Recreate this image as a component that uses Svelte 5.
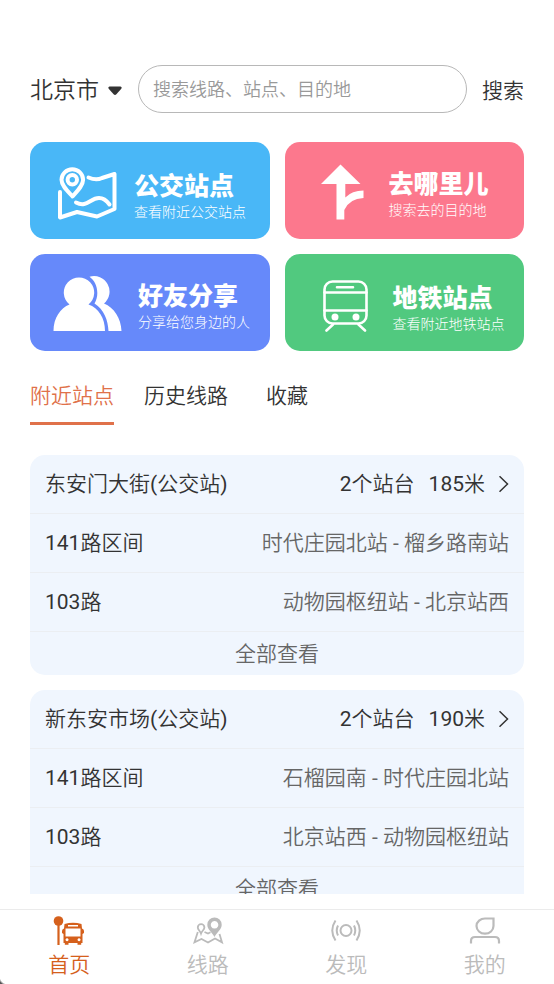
<script>
  const cards = [
    { id: 'bus', title: '公交站点', sub: '查看附近公交站点' },
    { id: 'where', title: '去哪里儿', sub: '搜索去的目的地' },
    { id: 'share', title: '好友分享', sub: '分享给您身边的人' },
    { id: 'metro', title: '地铁站点', sub: '查看附近地铁站点' }
  ];
  const tabs = ['附近站点', '历史线路', '收藏'];
  let active = $state(0);
  const stations = [
    {
      name: '东安门大街(公交站)', count: '2个站台', distance: '185米',
      lines: [
        { name: '141路区间', route: '时代庄园北站 - 榴乡路南站' },
        { name: '103路', route: '动物园枢纽站 - 北京站西' }
      ]
    },
    {
      name: '新东安市场(公交站)', count: '2个站台', distance: '190米',
      lines: [
        { name: '141路区间', route: '石榴园南 - 时代庄园北站' },
        { name: '103路', route: '北京站西 - 动物园枢纽站' }
      ]
    }
  ];
  const nav = [
    { id: 'home', label: '首页' },
    { id: 'line', label: '线路' },
    { id: 'find', label: '发现' },
    { id: 'me', label: '我的' }
  ];
</script>

<div class="app">
  <form class="search" onsubmit={(e) => e.preventDefault()}>
    <button type="button" class="city">
      北京市
      <svg width="16" height="10" viewBox="0 0 16 10" aria-hidden="true"><path d="M2.500 .5h11q2 .6.8 2.200L9.400 8.300Q8 9.600 6.600 8.300L1.700 2.700Q.5 1.100 2.500.5z" fill="#333" /></svg>
    </button>
    <input type="search" aria-label="搜索" placeholder="搜索线路、站点、目的地" />
    <button type="submit" class="submit">搜索</button>
  </form>

  <div class="cards">
    {#each cards as c}
      <button class="card {c.id}">
        {#if c.id === 'bus'}
          <svg width="62" height="54" viewBox="0 0 62 54" fill="none" stroke="#fff" stroke-width="4" stroke-linecap="round" stroke-linejoin="round" aria-hidden="true">
            <path d="M15.500 29.500C10.500 24 4.500 18.500 4.500 12.800a10.800 10.500 0 0 1 21.600 0C26.100 18.500 20.500 24 15.500 29.500z" />
            <circle cx="15.300" cy="12.800" r="4.700" />
            <path d="M31.500 10.500C36 12.500 40 13.500 45 11L57.500 7V42L40 49.500L20 45L3 50.500V25" />
            <path d="M19 35.500C30 41 33 31 42 31C47 31 50 34 52.500 37.500" />
          </svg>
        {:else if c.id === 'where'}
          <svg width="44" height="56" viewBox="0 0 44 56" fill="#fff" aria-hidden="true">
            <path d="M19.500 .5L39.500 20H24.300V33.500Q31 26.500 42.500 26.500V34Q28.500 34.500 23.300 46V55.500H15.500V20H0z" />
          </svg>
        {:else if c.id === 'share'}
          <svg width="70" height="56" viewBox="0 0 70 56" fill="#fff" aria-hidden="true">
            <path d="M16.500 28.500A15.200 15.200 0 1 1 35.500 28.500C45.500 32 52 42 52 55H.5C.5 42 7.500 32 16.500 28.500z" />
            <path d="M36.500 .8A15.500 15.500 0 0 1 51 27.500C61 31.500 68 42 68.500 55H55.500C55 44 51 33.500 41.500 27.500C47 18 44 6 36.500 .8z" />
          </svg>
        {:else}
          <svg width="46" height="52" viewBox="0 0 46 52" fill="none" stroke="#fff" stroke-width="2.600" stroke-linecap="round" aria-hidden="true">
            <rect x="1.500" y="1.500" width="42" height="42" rx="8" />
            <path d="M1.500 12.500h42M1.500 30.500h42M14 7.300h16M10 44.500l-6.500 6M35.500 44.500l6.500 6" />
            <circle cx="12" cy="37" r="3.500" fill="#fff" stroke="none" />
            <circle cx="33" cy="37" r="3.500" fill="#fff" stroke="none" />
          </svg>
        {/if}
        <span class="words"><strong>{c.title}</strong><small>{c.sub}</small></span>
      </button>
    {/each}
  </div>

  <div class="tabs" role="tablist">
    {#each tabs as t, i}
      <button role="tab" aria-selected={active === i} class:on={active === i} onclick={() => (active = i)}>{t}</button>
    {/each}
  </div>

  <main>
    {#each stations as s}
      <section>
        <a class="row head" href="#station">
          <span class="name">{s.name}</span>
          <span>{s.count}</span>
          <span>{s.distance}</span>
          <svg width="10" height="18" viewBox="0 0 10 18" fill="none" stroke="#333" stroke-width="1.500" aria-hidden="true"><path d="M.5 1.200L8.500 9L.5 16.800" /></svg>
        </a>
        {#each s.lines as l}
          <a class="row" href="#line"><span class="name">{l.name}</span><span class="route">{l.route}</span></a>
        {/each}
        <button class="all">全部查看</button>
      </section>
    {/each}
  </main>

  <nav>
    {#each nav as n, i}
      <a href="#{n.id}" class:on={i === 0}>
        {#if n.id === 'home'}
          <svg width="32" height="30" viewBox="0 0 32 30" aria-hidden="true">
            <circle cx="5.500" cy="5" r="4.800" fill="currentColor" />
            <path d="M5.500 8V29" stroke="currentColor" stroke-width="2.200" />
            <path fill="currentColor" fill-rule="evenodd" d="M11.500 8Q20 5.500 28.500 8L29 12.500Q31 13 31 15V17L29.500 18V27H28.200V28.800H24.500V27H15.500V28.800H11.800V27H10.500V18L9 17V15Q9 13 11 12.500zM15 8.900V10.500H25V8.900zM12.500 12.500V20.500H27.500V12.500zM14 22.300a1.500 1.500 0 1 0 .1 0zM26 22.300a1.500 1.500 0 1 0 .1 0z" />
          </svg>
        {:else if n.id === 'line'}
          <svg width="32" height="30" viewBox="0 0 32 30" aria-hidden="true">
            <path fill="currentColor" fill-rule="evenodd" d="M22.500 1.500a7.200 7.200 0 0 1 7.200 7.200C29.700 13.500 25 16 22.500 21C20 16 15.300 13.500 15.300 8.700A7.200 7.200 0 0 1 22.500 1.500zM22.500 5a3.800 3.800 0 1 0 .1 0z" />
            <path fill="none" stroke="currentColor" stroke-width="1.800" d="M9 17.500C8 14.500 5.800 14 5.800 11.500a3.300 3.300 0 0 1 6.600 0C12.400 14 10 14.500 9 17.500zM5.800 16L2.500 26.300L9.500 23L16 26.500L23 22.500L30 26.300L27.500 18M12.500 16L16 17.500L18.500 16.300" />
          </svg>
        {:else if n.id === 'find'}
          <svg width="32" height="30" viewBox="0 0 32 30" fill="none" stroke="currentColor" stroke-width="2" aria-hidden="true">
            <circle cx="16" cy="14.500" r="5.500" />
            <path d="M8 9.500Q5.500 14.500 8 19.500M24 9.500Q26.500 14.500 24 19.500M5.500 4.500Q-1 14.500 5.500 24.500M26.500 4.500Q33 14.500 26.500 24.500" />
          </svg>
        {:else}
          <svg width="32" height="30" viewBox="0 0 32 30" fill="none" stroke="currentColor" stroke-width="2.200" aria-hidden="true">
            <path d="M16 2.500H24.500V10A8.500 7.700 0 0 1 7.500 10A8.500 7.700 0 0 1 16 2.500zM2 27.500V25Q2 21 6 21H26Q30 21 30 25V27.500" />
          </svg>
        {/if}
        {n.label}
      </a>
    {/each}
  </nav>
</div>

<style>
  .app {
    position: relative;
    display: flex;
    flex-direction: column;
    height: 100vh;
    background: #fff;
    color: #333;
    font: 400 21px/30px Roboto, 'Noto Sans CJK SC DemiLight', 'Noto Sans CJK SC', sans-serif;
    box-sizing: border-box;
    overflow: hidden;
  }
  .app::after {
    content: '';
    position: absolute;
    left: 0;
    bottom: 0;
    width: 8px;
    height: 8px;
    background: radial-gradient(circle at 100% 0, transparent 8px, #555 10px);
  }
  button, input {
    font: inherit;
    color: inherit;
    background: none;
    border: 0;
    padding: 0;
    margin: 0;
  }
  button { cursor: pointer; }
  a { color: inherit; text-decoration: none; }
  svg { flex: none; display: block; }
  .search {
    display: flex;
    align-items: center;
    gap: 15px;
    padding: 65px 30px 29px;
  }
  .city, .submit {
    display: flex;
    align-items: center;
    gap: 8px;
    line-height: 34px;
    padding-top: 3px;
    white-space: nowrap;
  }
  .city { font-size: 23px; }
  input {
    flex: 1;
    min-width: 0;
    height: 48px;
    box-sizing: border-box;
    border: 1px solid #b8b8b8;
    border-radius: 24px;
    padding: 0 14px;
    font-size: 18px;
    appearance: none;
  }
  input::placeholder { color: #999; opacity: 1; }
  .cards {
    display: grid;
    grid-template-columns: 1fr 1fr;
    gap: 15px;
    padding: 0 30px;
  }
  .card {
    display: flex;
    align-items: center;
    height: 97px;
    border-radius: 15px;
    color: #fff;
    text-align: left;
    box-sizing: border-box;
  }
  .bus { background: #49b7f7; padding: 6px 0 0 27px; gap: 15px; }
  .where { background: #fc788d; padding: 2px 0 0 36px; gap: 24px; }
  .share { background: #6689fa; padding: 2px 0 0 23px; gap: 15px; }
  .metro { background: #51c97f; padding: 6px 0 0 38px; gap: 24px; }
  .words {
    display: flex;
    flex-direction: column;
    white-space: nowrap;
    padding-top: 6px;
    font-family: Roboto, 'Noto Sans CJK SC', sans-serif;
  }
  strong { font-size: 25px; line-height: 30px; font-weight: 900; }
  small { font-size: 14px; line-height: 20px; font-weight: 300; }
  .tabs {
    display: flex;
    gap: 30px;
    padding: 30px 30px 0;
  }
  .tabs button {
    padding-bottom: 11px;
    border-bottom: 3px solid transparent;
  }
  .tabs button:last-child { padding-left: 8px; }
  .tabs .on { color: #e0714a; border-color: #e0714a; }
  main {
    flex: 1;
    min-height: 0;
    overflow: hidden;
    margin: 30px 30px 15px;
    display: flex;
    flex-direction: column;
    gap: 15px;
  }
  section {
    flex: none;
    background: #f0f6fe;
    border-radius: 15px;
    overflow: hidden;
  }
  .row {
    display: flex;
    align-items: center;
    gap: 15px;
    height: 58px;
    padding: 0 15px;
    border-bottom: 1px solid #ebeef2;
    white-space: nowrap;
  }
  .head { gap: 14px; }
  .name { flex: 1; }
  .route, .all { color: #666; }
  .all { display: block; width: 100%; height: 43px; }
  nav {
    display: flex;
    border-top: 1px solid #ebebeb;
    height: 74px;
    color: #bbb;
  }
  nav a {
    flex: 1;
    display: flex;
    flex-direction: column;
    align-items: center;
    padding-top: 6px;
    line-height: 38px;
  }
  nav .on { color: #d5601c; }
</style>
